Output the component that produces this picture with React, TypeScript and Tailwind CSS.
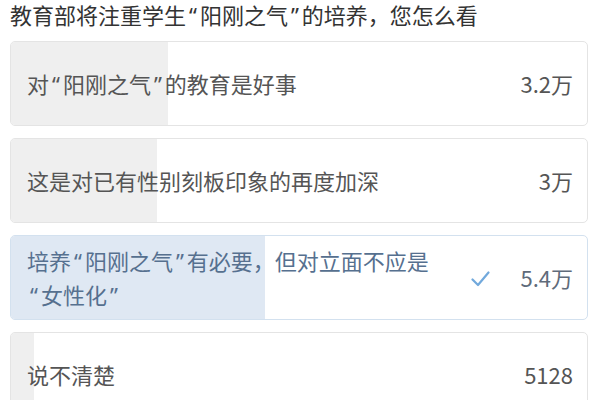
const options = [
  { text: '对“阳刚之气”的教育是好事', count: '3.2万', pct: 27.2 },
  { text: '这是对已有性别刻板印象的再度加深', count: '3万', pct: 25.3 },
  { text: '培养“阳刚之气”有必要，但对立面不应是“女性化”', count: '5.4万', pct: 44.1, chosen: true },
  { text: '说不清楚', count: '5128', pct: 4 },
];

// The CJK font draws curly quotes full width; the screenshot's are the narrow Latin ones.
// A <wbr> before the opening quote lets the line break there, as in the screenshot.
function Quoted({ text }: { text: string }) {
  const parts = text.split(/([“”])/);
  return (
    <>
      {parts.map((p, i) =>
        p === '“' || p === '”' ? (
          <span key={i}>
            {p === '“' && <wbr />}
            <span className="font-['Noto_Sans'] px-[3px]">{p}</span>
          </span>
        ) : (
          <span key={i}>{p}</span>
        )
      )}
    </>
  );
}

function Check() {
  return (
    <svg width="19" height="16" viewBox="0 0 19 16" fill="none">
      <path d="M1.5 8.5 L7 14 L17.5 1.5" stroke="#72a9dc" strokeWidth="2.2" strokeLinecap="round" strokeLinejoin="round" />
    </svg>
  );
}

export default function App() {
  return (
    <div
      className="w-[600px] h-[400px] overflow-hidden bg-white pl-[10px] pr-[12px]"
      style={{ fontFamily: '"Noto Sans CJK SC", "Noto Sans", sans-serif' }}
    >
      <h1 className="pt-[2px] text-[22px] leading-[24px] text-[#333] font-normal whitespace-nowrap">
        <Quoted text="教育部将注重学生“阳刚之气”的培养，您怎么看" />
      </h1>
      <div className="mt-[14px] flex flex-col gap-3">
        {options.map((o) => (
          <div
            key={o.text}
            className={`relative h-[85px] shrink-0 rounded-[5px] border overflow-hidden ${
              o.chosen ? 'border-[#d3e1ef]' : 'border-[#e4e4e4]'
            }`}
          >
            <div
              className={`absolute inset-y-0 left-0 ${o.chosen ? 'bg-[#dfe8f3]' : 'bg-[#efefef]'}`}
              style={{ width: `${o.pct}%` }}
            />
            <div className="relative h-full flex items-center pl-4 pr-[14px]">
              <div
                className={`flex-1 min-w-0 text-[22px] leading-[33px] pr-4 ${
                  o.chosen ? 'text-[#56708f]' : 'text-[#555]'
                }`}
              >
                <Quoted text={o.text} />
              </div>
              {o.chosen && (
                <div className="mr-[30px] mt-[3px]">
                  <Check />
                </div>
              )}
              <div className={`text-[22px] leading-[33px] ${o.chosen ? 'text-[#5f6b7a]' : 'text-[#555]'}`}>
                {o.count}
              </div>
            </div>
          </div>
        ))}
      </div>
    </div>
  );
}
